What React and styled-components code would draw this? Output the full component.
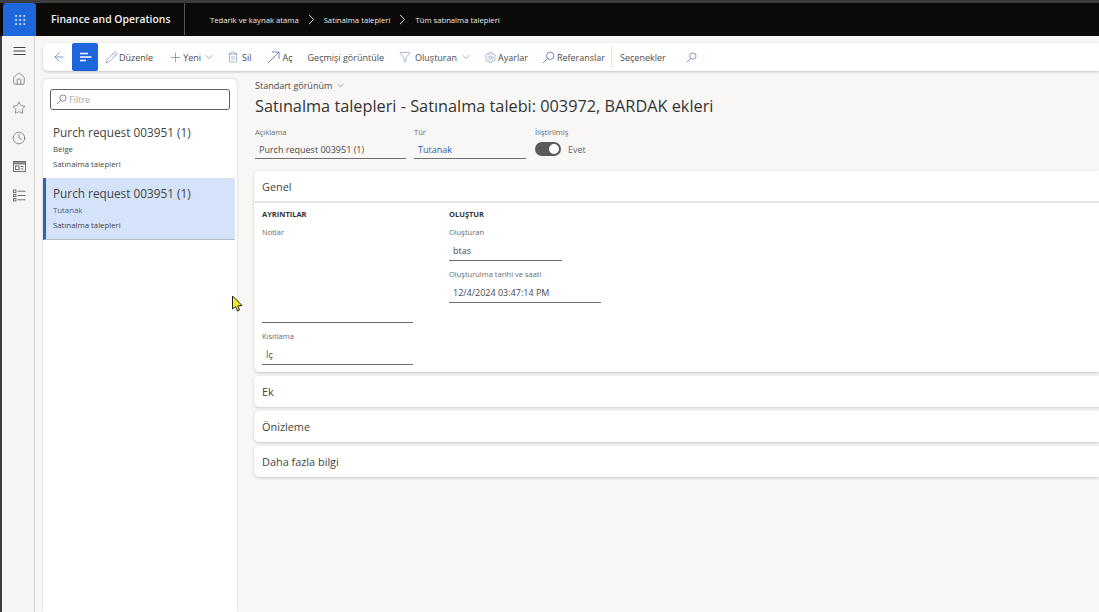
import React from 'react';
import styled, { createGlobalStyle } from 'styled-components';
import { ArrowLeft, Pencil, Plus, ChevronDown, ChevronRight, Trash2, Filter, Settings, Home, Star, Clock, Grip } from 'lucide-react';

const GlobalStyle = createGlobalStyle`
  html, body { margin: 0; height: 100%; overflow: hidden; }
  body { font-family: "Open Sans", "Noto Sans", "Liberation Sans", sans-serif; background: #f8f7f5; color: #333; }
`;

const Page = styled.div`
  width: 1099px;
  height: 612px;
  display: flex;
  flex-direction: column;
  overflow: hidden;
  position: relative;
`;

const TopBar = styled.header`
  height: 33px;
  border-top: 3px solid #3d3d3d;
  background: #0b0a09;
  display: flex;
  align-items: stretch;
  flex-shrink: 0;
`;

const AppTile = styled.div`
  width: 33px;
  margin-left: 3px;
  background: #1e66dc;
  color: #e8effc;
  display: flex;
  align-items: center;
  justify-content: center;
  border-radius: 3px 3px 0 0;
`;

const AppName = styled.div`
  width: 149px;
  padding-left: 15px;
  box-sizing: border-box;
  border-right: 1px solid #555;
  margin-bottom: 1px;
  color: #f0f0f0;
  font-size: 10.4px;
  font-weight: 600;
  line-height: 33px;
  white-space: nowrap;
`;

const Crumbs = styled.nav`
  display: flex;
  align-items: center;
  padding-left: 25px;
  gap: 4px;
  color: #ececec;
  font-size: 7.7px;
  white-space: nowrap;
`;

const Body = styled.div`
  flex: 1;
  display: flex;
  min-height: 0;
`;

const Rail = styled.aside`
  width: 35px;
  border-left: 2px solid #3d3d3d;
  border-right: 1px solid #d8d6d4;
  box-sizing: border-box;
  background: #f6f5f3;
  display: flex;
  flex-direction: column;
  align-items: center;
  padding: 10px 0 0 2px;
  gap: 15.6px;
  color: #666;
  flex-shrink: 0;
`;

const Main = styled.main`
  flex: 1;
  display: flex;
  flex-direction: column;
  padding: 7px 0 0 8px;
  min-width: 0;
`;

const Toolbar = styled.div`
  height: 28px;
  background: #fff;
  border-radius: 5px 0 0 5px;
  box-shadow: 0 1px 3px rgba(0, 0, 0, 0.22);
  display: flex;
  align-items: center;
  color: #4a4a4a;
  font-size: 9px;
  flex-shrink: 0;
`;

const ToolItem = styled.div`
  display: flex;
  align-items: center;
  gap: ${props => props.$gap ?? 2}px;
  margin-left: ${props => props.$left ?? 0}px;
  color: #4a4a4a;
  white-space: nowrap;
  svg { color: #5b7fb3; flex-shrink: 0; }
`;

const ActiveTool = styled.div`
  width: 26px;
  height: 28px;
  margin-left: 6px;
  background: #1e66dc;
  border-radius: 2px;
  display: flex;
  align-items: center;
  justify-content: center;
`;

const ToolDivider = styled.div`
  width: 1px;
  height: 22px;
  margin-left: 6px;
  background: #e4e4e4;
`;

const Panes = styled.div`
  flex: 1;
  display: flex;
  min-height: 0;
  padding-top: 8px;
`;

const ListPane = styled.section`
  width: 194px;
  background: #fff;
  border-radius: 5px 5px 0 0;
  box-shadow: 0 0 3px rgba(0, 0, 0, 0.16);
  flex-shrink: 0;
  padding-top: 10px;
`;

const FilterBox = styled.div`
  height: 21px;
  margin: 0 7px;
  border: 1px solid #5a6068;
  border-radius: 3px;
  box-sizing: border-box;
  display: flex;
  align-items: center;
  gap: 2px;
  padding-left: 5px;
  color: #a5a5a5;
  font-size: 9px;
  svg { color: #666; }
`;

const ListItem = styled.div`
  height: ${props => (props.$selected ? 62 : 68)}px;
  box-sizing: border-box;
  margin-right: 2px;
  padding: ${props => (props.$selected ? '7px 0 0 7px' : '14px 0 0 10px')};
  background: ${props => (props.$selected ? '#d5e3f8' : 'transparent')};
  border-left: ${props => (props.$selected ? '3px solid #2b62c4' : '0')};
  border-bottom: ${props => (props.$selected ? '1px solid #b8bcc4' : '0')};
`;

const ItemTitle = styled.div`
  font-size: 11.8px;
  font-weight: 500;
  color: #444;
  line-height: 16px;
  margin-bottom: 2px;
`;

const ItemMeta = styled.div`
  font-size: 7.8px;
  color: ${props => props.$color || '#444'};
  line-height: 15px;
`;

const Detail = styled.section`
  flex: 1;
  min-width: 0;
  padding-left: 18px;
`;

const ViewPicker = styled.div`
  display: flex;
  align-items: center;
  gap: 3px;
  font-size: 9px;
  color: #4a4a4a;
  line-height: 13px;
`;

const Title = styled.h1`
  margin: 3px 0 0;
  font-size: 16.3px;
  font-weight: 500;
  color: #333;
  line-height: 22px;
  white-space: nowrap;
`;

const HeaderFields = styled.div`
  display: flex;
  margin-top: 10px;
`;

const FieldLabel = styled.div`
  font-size: 7.5px;
  color: #6a6a6a;
  line-height: 11px;
  margin-top: ${props => props.$top ?? 0}px;
`;

const FieldValue = styled.div`
  width: ${props => props.$width}px;
  height: ${props => props.$height ?? 20}px;
  box-sizing: border-box;
  margin-top: ${props => props.$top ?? 3}px;
  padding-left: 4px;
  border-bottom: 1px solid #6f6f6f;
  font-size: 9px;
  line-height: ${props => props.$height ?? 20}px;
  color: ${props => props.$color || '#4a4a4a'};
  white-space: nowrap;
`;

const Field = styled.div`
  margin-right: ${props => props.$right ?? 0}px;
`;

const ToggleRow = styled.div`
  display: flex;
  align-items: center;
  gap: 7px;
  height: 16px;
  margin-top: 3px;
  font-size: 9px;
  color: #666;
`;

const Toggle = styled.div`
  width: 26px;
  height: 14px;
  border-radius: 7px;
  background: #5a5a5a;
  position: relative;
  &::after {
    content: '';
    position: absolute;
    right: 2px;
    top: 2px;
    width: 10px;
    height: 10px;
    border-radius: 50%;
    background: #fff;
  }
`;

const Card = styled.div`
  background: #fff;
  border-radius: 5px 0 0 5px;
  box-shadow: 0 1px 3px rgba(0, 0, 0, 0.2);
  margin: ${props => props.$top ?? 4}px 0 0 -1px;
`;

const CardHeader = styled.div`
  height: ${props => props.$height ?? 31}px;
  padding-left: 8px;
  font-size: 10.9px;
  font-weight: 500;
  color: #444;
  line-height: 32px;
`;

const CardRule = styled.div`
  height: 2px;
  background: #e6e6e6;
`;

const CardBody = styled.div`
  display: flex;
  padding: 6px 0 0 8px;
  height: 169px;
  box-sizing: border-box;
`;

const Group = styled.div`
  width: ${props => props.$width}px;
`;

const GroupTitle = styled.div`
  font-size: 7.5px;
  font-weight: 700;
  color: #333;
  line-height: 11px;
  margin-bottom: 7px;
`;

const Notes = styled.div`
  width: 151px;
  height: 84px;
  border-bottom: 1px solid #6f6f6f;
  margin-bottom: 8px;
`;

const Cursor = styled.svg`
  position: absolute;
  left: 231px;
  top: 295px;
`;

const LensIcon = ({ size = 13 }) => (
  <svg width={size} height={size} viewBox="0 0 13 13" fill="none" stroke="currentColor" strokeWidth="0.9">
    <circle cx="8.2" cy="4.8" r="3.7" />
    <path d="M5.5 7.5 L1 12" />
  </svg>
);

const OpenArrowIcon = () => (
  <svg width="15" height="15" viewBox="0 0 15 15" fill="none" stroke="currentColor" strokeWidth="0.9" style={{ marginRight: 2 }}>
    <path d="M2 13 L13 2 M6 2 H13 V9" />
  </svg>
);

const LinesIcon = () => (
  <svg width="13" height="10" viewBox="0 0 13 10" fill="none" stroke="#fff" strokeWidth="1.3">
    <path d="M1 1.5 H9 M1 5 H12.5 M1 8.5 H7" />
  </svg>
);

const HamburgerIcon = () => (
  <svg width="13" height="10" viewBox="0 0 13 10" fill="none" stroke="#444" strokeWidth="1.1">
    <path d="M0.5 1.5 H12.5 M0.5 5 H12.5 M0.5 8.5 H12.5" />
  </svg>
);

const WorkspaceIcon = () => (
  <svg width="13" height="13" viewBox="0 0 13 13" fill="none" stroke="currentColor" strokeWidth="0.9">
    <rect x="0.5" y="1.5" width="12" height="10" />
    <rect x="0.5" y="1.5" width="12" height="2.4" fill="#999" />
    <rect x="2.5" y="6" width="3.5" height="3.5" />
    <path d="M7.5 6.5 H10.5 M7.5 9 H10.5" />
  </svg>
);

const ModulesIcon = () => (
  <svg width="13" height="13" viewBox="0 0 13 13" fill="none" stroke="currentColor" strokeWidth="0.9">
    <rect x="0.5" y="1" width="2.4" height="2.4" />
    <rect x="0.5" y="5.3" width="2.4" height="2.4" />
    <rect x="0.5" y="9.6" width="2.4" height="2.4" />
    <path d="M4.5 2.2 H12.5 M4.5 6.5 H12.5 M4.5 10.8 H12.5" />
  </svg>
);

const crumbs = ['Tedarik ve kaynak atama', 'Satınalma talepleri', 'Tüm satınalma talepleri'];

const App = () => (
  <Page>
    <GlobalStyle />
    <TopBar>
      <AppTile><Grip size={14} strokeWidth={1.6} /></AppTile>
      <AppName>Finance and Operations</AppName>
      <Crumbs>
        {crumbs.map((crumb, i) => (
          <React.Fragment key={crumb}>
            {i > 0 && <ChevronRight size={17} strokeWidth={1.4} />}
            <span>{crumb}</span>
          </React.Fragment>
        ))}
      </Crumbs>
    </TopBar>
    <Body>
      <Rail>
        <HamburgerIcon />
        <Home size={14} strokeWidth={1.2} />
        <Star size={14} strokeWidth={1.2} />
        <Clock size={14} strokeWidth={1.2} />
        <WorkspaceIcon />
        <ModulesIcon />
      </Rail>
      <Main>
        <Toolbar>
          <ToolItem $left={9}><ArrowLeft size={14} strokeWidth={1.3} /></ToolItem>
          <ActiveTool><LinesIcon /></ActiveTool>
          <ToolItem $left={7} $gap={1}><Pencil size={13} strokeWidth={1.1} />Düzenle</ToolItem>
          <ToolItem $left={15} $gap={0}><Plus size={15} strokeWidth={1.1} />Yeni<ChevronDown size={12} strokeWidth={1.3} style={{ marginLeft: 2 }} /></ToolItem>
          <ToolItem $left={12} $gap={3}><Trash2 size={12} strokeWidth={1.1} />Sil</ToolItem>
          <ToolItem $left={14} $gap={0}><OpenArrowIcon />Aç</ToolItem>
          <ToolItem $left={15}>Geçmişi görüntüle</ToolItem>
          <ToolItem $left={15} $gap={4}><Filter size={12} strokeWidth={1.1} />Oluşturan<ChevronDown size={12} strokeWidth={1.3} style={{ marginLeft: -1 }} /></ToolItem>
          <ToolItem $left={12} $gap={1}><Settings size={13} strokeWidth={1.1} />Ayarlar</ToolItem>
          <ToolItem $left={14}><LensIcon />Referanslar</ToolItem>
          <ToolDivider />
          <ToolItem $left={8}>Seçenekler</ToolItem>
          <ToolItem $left={20}><LensIcon size={11} /></ToolItem>
        </Toolbar>
        <Panes>
          <ListPane>
            <FilterBox><LensIcon size={11} />Filtre</FilterBox>
            <ListItem>
              <ItemTitle>Purch request 003951 (1)</ItemTitle>
              <ItemMeta>Belge</ItemMeta>
              <ItemMeta>Satınalma talepleri</ItemMeta>
            </ListItem>
            <ListItem $selected>
              <ItemTitle>Purch request 003951 (1)</ItemTitle>
              <ItemMeta $color="#3d5f9c">Tutanak</ItemMeta>
              <ItemMeta>Satınalma talepleri</ItemMeta>
            </ListItem>
          </ListPane>
          <Detail>
            <ViewPicker>Standart görünüm<ChevronDown size={11} strokeWidth={1.1} /></ViewPicker>
            <Title>Satınalma talepleri - Satınalma talebi: 003972, BARDAK ekleri</Title>
            <HeaderFields>
              <Field $right={8}>
                <FieldLabel>Açıklama</FieldLabel>
                <FieldValue $width={151} $height={19} $top={2}>Purch request 003951 (1)</FieldValue>
              </Field>
              <Field $right={9}>
                <FieldLabel>Tür</FieldLabel>
                <FieldValue $width={112} $height={19} $top={2} $color="#2e5fa8">Tutanak</FieldValue>
              </Field>
              <Field>
                <FieldLabel>İliştirilmiş</FieldLabel>
                <ToggleRow><Toggle />Evet</ToggleRow>
              </Field>
            </HeaderFields>
            <Card $top={12}>
              <CardHeader $height={30}>Genel</CardHeader>
              <CardRule />
              <CardBody>
                <Group $width={187}>
                  <GroupTitle>AYRINTILAR</GroupTitle>
                  <FieldLabel>Notlar</FieldLabel>
                  <Notes />
                  <FieldLabel>Kısıtlama</FieldLabel>
                  <FieldValue $width={151}>İç</FieldValue>
                </Group>
                <Group $width={160}>
                  <GroupTitle>OLUŞTUR</GroupTitle>
                  <FieldLabel>Oluşturan</FieldLabel>
                  <FieldValue $width={113}>btas</FieldValue>
                  <FieldLabel $top={8}>Oluşturulma tarihi ve saati</FieldLabel>
                  <FieldValue $width={152}>12/4/2024 03:47:14 PM</FieldValue>
                </Group>
              </CardBody>
            </Card>
            <Card><CardHeader>Ek</CardHeader></Card>
            <Card><CardHeader>Önizleme</CardHeader></Card>
            <Card><CardHeader>Daha fazla bilgi</CardHeader></Card>
          </Detail>
        </Panes>
      </Main>
    </Body>
    <Cursor width="13" height="18" viewBox="0 0 13 18">
      <path d="M1.5 1 L1.5 14 L4.5 11.5 L6.5 16 L8.5 15 L6.8 10.8 L11 10.5 Z" fill="#f2ee2a" stroke="#222" strokeWidth="1" />
    </Cursor>
  </Page>
);

export default App;
